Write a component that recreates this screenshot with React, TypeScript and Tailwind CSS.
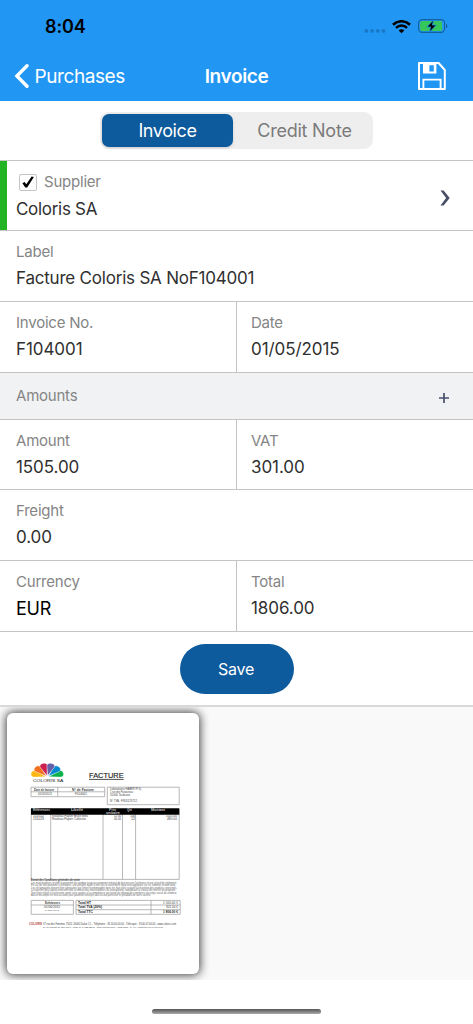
import type { ReactNode } from "react";

function StatusBar() {
  return (
    <div className="flex h-[51px] items-center justify-between pl-[45px] pr-[25px] pt-[2px]">
      <span className="text-[18px] font-semibold tracking-[-0.1px] text-black">8:04</span>
      <div className="flex items-center">
        <svg width="22" height="14" viewBox="0 0 22 14" fill="#1878c8">
          <circle cx="2.4" cy="10.9" r="1.9" />
          <circle cx="8.1" cy="10.9" r="1.9" />
          <circle cx="13.8" cy="10.9" r="1.9" />
          <circle cx="19.5" cy="10.9" r="1.9" />
        </svg>
        <svg className="ml-[6px]" width="19" height="14" viewBox="0 0 19 14" fill="none" stroke="#000">
          <path d="M1 4.7a12.2 12.2 0 0 1 17 0" strokeWidth="2.6" />
          <path d="M4 7.8a8 8 0 0 1 11 0" strokeWidth="2.5" />
          <path d="M9.5 13.2 6.7 10.4a3.9 3.9 0 0 1 5.6 0Z" fill="#000" stroke="none" />
        </svg>
        <svg className="relative top-[-1px] ml-[7px]" width="30" height="14" viewBox="0 0 30 14">
          <rect x="0.6" y="0.6" width="26" height="12.8" rx="3.6" fill="none" stroke="#165f9e" strokeWidth="1.1" />
          <path d="M28 4.7c1.8.6 1.8 4 0 4.6Z" fill="#165f9e" />
          <rect x="2.1" y="2.1" width="22" height="9.8" rx="2" fill="#35c759" />
          <path d="M15.7.8 8.8 8h3.8l-1.2 5.2L18.3 6h-3.9Z" fill="#000" stroke="#2196f3" strokeWidth="0.8" />
        </svg>
      </div>
    </div>
  );
}

function NavBar() {
  return (
    <div className="grid h-[50px] grid-cols-[1fr_auto_1fr] items-center pl-[14px] pr-[27px] text-white">
      <div className="flex items-center gap-[5.5px]">
        <svg width="15" height="26" viewBox="0 0 15 26" fill="none" stroke="#fff" strokeWidth="3.4" strokeLinecap="round" strokeLinejoin="miter">
          <path d="M13 2.8 2.9 13 13 23.2" />
        </svg>
        <span className="relative top-px text-[19px] tracking-[-0.42px]">Purchases</span>
      </div>
      <span className="relative left-[6.5px] top-px text-[19px] font-semibold tracking-[-0.38px]">Invoice</span>
      <svg className="justify-self-end" width="28" height="28" viewBox="0 0 28 28" fill="none" stroke="#fff" strokeWidth="2">
        <path d="M1 1h19.6l6.2 7v19H1Z" strokeLinejoin="round" />
        <path d="M5.4 27V17.6h17.2V27" strokeWidth="1.9" />
        <path fillRule="evenodd" d="M5 1h13.4v10.6H5ZM11.4 3.2v6.2h4.4V3.2Z" fill="#fff" stroke="none" />
      </svg>
    </div>
  );
}

function Field({ label, value, className = "", valueClass = "text-[17px] tracking-[-0.08px] text-[#303030]" }: {
  label: ReactNode;
  value: string;
  className?: string;
  valueClass?: string;
}) {
  return (
    <div className={`flex flex-col pl-4 pt-[11px] ${className}`}>
      <div className="h-5 text-[15px] leading-5 tracking-[-0.22px] text-[#858585]">{label}</div>
      <div className={`mt-[6px] h-5 leading-5 ${valueClass}`}>{value}</div>
    </div>
  );
}

const petals: [number, string][] = [
  [-74, "#fcb711"],
  [74, "#0db14b"],
  [-45, "#f37021"],
  [45, "#0089d0"],
  [-15, "#cc2050"],
  [15, "#6460aa"],
];

type Line = [x: number, y: number, width: number, size: number, text: string, weight?: number, color?: string];

const lines: Line[] = [
  [26, 68.6, 30.3, 3.9, "COLORIS SA", 400, "#222"],
  [27, 77.6, 20, 2.9, "Date de facture", 700],
  [65, 77.6, 22, 2.9, "N° de Facture", 700],
  [31, 82.2, 14, 2.6, "01/05/2015"],
  [68, 82.2, 12, 2.6, "F104001"],
  [103, 77.3, 31, 2.9, "Laboratoires HABER PI Kj"],
  [103, 80, 23, 2.9, "1 rue des Pastoureau"],
  [103, 82.6, 20, 2.9, "31000 Toulouse"],
  [103, 89.4, 27, 2.9, "N° TVA : FR05123712"],
  [26, 98.1, 17, 2.9, "Références", 700, "#ccc"],
  [64, 98.1, 12, 2.9, "Libellé", 700, "#ccc"],
  [102, 98.1, 7, 2.9, "Prix", 700, "#ccc"],
  [99, 101.1, 14, 2.9, "unitaire", 700, "#ccc"],
  [120, 98.1, 5, 2.9, "Qté", 700, "#ccc"],
  [144, 98.1, 14, 2.9, "Montant", 700, "#ccc"],
  [26, 103.9, 11, 2.9, "111022"],
  [26, 106.5, 11, 2.9, "111023"],
  [45, 103.9, 36, 2.9, "Rouleau Papier Brute bleu"],
  [45, 106.5, 34, 2.9, "Rouleau Papier Collector"],
  [107, 103.9, 7, 2.9, "12.00"],
  [107, 106.5, 7, 2.9, "40.00"],
  [123, 103.9, 5, 2.9, "100"],
  [124, 106.5, 4, 2.9, "12"],
  [159, 103.9, 11, 2.9, "1025.00"],
  [160, 106.5, 10, 2.9, "480.00"],
  [24, 168.2, 49, 2.8, "Extrait des Conditions générales de vente", 700],
  [38, 190.6, 15, 2.8, "Echéances", 700],
  [37, 195.4, 16, 2.8, "01/06/2015"],
  [38, 197.5, 14, 2.2, "1 806.00 €"],
  [71, 190.6, 13, 2.9, "Total HT", 700, "#222"],
  [71, 195.4, 24, 2.9, "Total TVA (20%)", 700, "#222"],
  [71, 200.1, 15, 2.9, "Total TTC", 700, "#222"],
  [156, 190.6, 15, 2.8, "1 505.00 €"],
  [159, 195.4, 12, 2.8, "301.00 €"],
  [156, 200.1, 15, 2.8, "1 806.00 €", 700, "#222"],
  [22, 212.3, 13, 2.6, "COLORIS", 700, "#b04038"],
  [36, 212.3, 133, 2.6, "37 rue des Femmes 75011 20000 Dakar C1 - Téléphone : 33.20.00.00.00 - Télécopie : 33.00.07.00.00 - www.coloris.com"],
  [36, 214.7, 120, 2.3, "SA au Capital de 200 000€ - Code NAF 1234B000 - Siret 0000000000 - RCS Nant - N° TVA intracom FR 00 000 000"],
  [24, 170.7, 146, 2.8, "Les marchandises restent la propriété du vendeur jusqu'au paiement intégral de leur prix par l'acheteur et tout retard de règlement.", 400, "#666"],
  [24, 173.2, 145, 2.8, "En cas de non paiement à échéance, une pénalité égale à trois fois le taux intérêt légal sera appliquée sur les sommes restant dues.", 400, "#666"],
  [24, 175.7, 146, 2.8, "Les réclamations doivent être adressées par lettre recommandée dans les huit jours suivant la réception des produits concernés.", 400, "#666"],
  [24, 178.2, 145, 2.8, "Le transfert des risques intervient dès la remise des marchandises au transporteur, nonobstant la clause de réserve de propriété.", 400, "#666"],
  [24, 180.7, 146, 2.8, "Tout litige relatif à la présente vente sera soumis à la compétence exclusive du tribunal de commerce du siège social du vendeur.", 400, "#666"],
  [24, 183.2, 120, 2.8, "Aucun escompte ne sera accordé pour paiement anticipé sauf accord particulier et préalable de notre société.", 400, "#666"],
];

function InvoiceScan() {
  return (
    <svg width="192" height="261" viewBox="0 0 192 261" fontFamily="'Liberation Sans', sans-serif">
      <svg x="20" y="46" width="42" height="18.2" viewBox="20 46 42 18.2">
        {petals.map(([angle, color]) => (
          <path
            key={color}
            d="M40.3 62.8L37.1 53.4C35.9 48.6 44.7 48.6 43.5 53.4Z"
            fill={color}
            stroke="#fff"
            strokeWidth="0.4"
            transform={`translate(40.3 64) scale(1.18 1) rotate(${angle}) translate(-40.3 -64)`}
          />
        ))}
      </svg>
      <text x="82" y="65.2" fontSize="7.3" textLength="34.7" lengthAdjust="spacingAndGlyphs" fill="#222" stroke="#222" strokeWidth="0.15">FACTURE</text>
      <path d="M82 66.4h34.7" stroke="#222" strokeWidth="0.8" />
      <g fill="none" stroke="#999" strokeWidth="0.7">
        <path d="M24 74.2h73.7v9.5H24ZM24 78.8h73.7M50.7 74.2v9.5M100.3 74.2h71.9v17.5h-71.9Z" />
        <path d="M24.2 96v70.4h148V96M43.7 101v65.4M96 101v65.4M115.5 101v65.4M128.6 101v65.4" />
        <path d="M24.2 187.4h42.2v13.9H24.2ZM24.2 192h42.2M69 187.4h104.2v13.9H69ZM69 192h104.2M69 196.7h104.2M144 187.4v13.9" />
      </g>
      <path d="M24 95.3h148.3v6.4H24Z" fill="#000" />
      {lines.map(([x, y, width, size, text, weight = 400, color = "#444"]) => (
        <text key={`${x}-${y}`} x={x} y={y} fontSize={size} fontWeight={weight} fill={color} textLength={width} lengthAdjust="spacingAndGlyphs">
          {text}
        </text>
      ))}
    </svg>
  );
}

export default function App() {
  return (
    <div className="flex h-[1024px] w-[473px] flex-col overflow-hidden bg-white font-['Inter',sans-serif]">
      <header className="h-[101px] shrink-0 bg-[#2196f3]">
        <StatusBar />
        <NavBar />
      </header>

      <div className="flex h-[59px] shrink-0 justify-center pt-[11px]">
        <div className="flex h-[37px] w-[273px] rounded-[9px] bg-[#eeeeee] p-[2px] text-[18px]">
          <button className="h-[33px] w-[131px] rounded-[7px] bg-[#0d5a9c] tracking-[-0.4px] text-white shadow-[0_1px_3px_rgba(0,0,0,0.15)]">Invoice</button>
          <button className="flex-1 pl-[5px] tracking-[-0.25px] text-[#7b7b7b]">Credit Note</button>
        </div>
      </div>

      <main className="flex shrink-0 flex-col">
        <section className="flex h-[70px] items-center justify-between border-t border-[#c4c4c4] pr-[23px]">
          <div className="h-full w-[7px] bg-[#22b422]" />
          <Field
            className="h-full flex-1 !pl-[9px]"
            valueClass="pt-px text-[17px] tracking-[-0.3px] text-[#303030]"
            label={
              <span className="flex h-5 items-center gap-[7px] pl-[3px]">
                <span className="flex h-[17px] w-[18px] items-center justify-center rounded-[2px] border border-[#c4c4c4]">
                  <svg width="14" height="14" viewBox="0 0 14 14">
                    <path d="M1.4 8.2 3.6 7l1.7 2.3L10.6 1.6l2.3.3-6.7 10.6-1.9.1Z" fill="#000" />
                  </svg>
                </span>
                Supplier
              </span>
            }
            value="Coloris SA"
          />
          <svg className="mt-[5px]" width="10" height="16" viewBox="0 0 10 16" fill="#484e66">
            <path d="M.5.5h3.1L9.7 8l-6.1 7.5H.5L6.1 8Z" />
          </svg>
        </section>
        <section className="h-[71px] border-t border-[#c4c4c4]">
          <Field label="Label" value="Facture Coloris SA NoF104001" valueClass="text-[17px] tracking-[-0.21px] text-[#303030]" />
        </section>
        <section className="grid h-[71px] grid-cols-[236px_1fr] border-t border-[#c4c4c4]">
          <Field label="Invoice No." value="F104001" />
          <Field className="border-l border-[#c4c4c4] !pl-[14px]" label="Date" value="01/05/2015" />
        </section>
        <section className="flex h-[47px] items-center justify-between border-t border-[#c4c4c4] bg-[#f0f2f4] pl-4 pr-[24px]">
          <span className="text-[15px] tracking-[-0.22px] text-[#858585]">Amounts</span>
          <svg className="mt-[4px]" width="10" height="10" viewBox="0 0 10 10" stroke="#484e6c" strokeWidth="1.7">
            <path d="M5 0v10M0 5h10" />
          </svg>
        </section>
        <section className="grid h-[70px] grid-cols-[236px_1fr] border-t border-[#c4c4c4]">
          <Field label="Amount" value="1505.00" />
          <Field className="border-l border-[#c4c4c4] !pl-[14px]" label="VAT" value="301.00" />
        </section>
        <section className="h-[71px] border-t border-[#c4c4c4]">
          <Field label="Freight" value="0.00" />
        </section>
        <section className="grid h-[71px] grid-cols-[236px_1fr] border-t border-[#c4c4c4]">
          <Field label="Currency" value="EUR" valueClass="pt-px text-[18px] tracking-[-0.2px] text-black" />
          <Field className="border-l border-[#c4c4c4] !pl-[14px]" label="Total" value="1806.00" />
        </section>
        <section className="flex h-[74px] justify-center border-t border-[#c4c4c4] pt-[12px]">
          <button className="h-[50px] w-[114px] rounded-full bg-[#0d5a9c] pr-px text-[16px] tracking-[-0.2px] text-white">Save</button>
        </section>
      </main>

      <section className="h-[275px] shrink-0 overflow-hidden border-t-2 border-[#d9d9d9] bg-[#f9f9f9] pl-[7px] pt-[6px]">
        <div className="h-[261px] w-[192px] overflow-hidden rounded-[6px] bg-white shadow-[0_0_10px_1px_rgba(0,0,0,0.75)]">
          <InvoiceScan />
        </div>
      </section>

      <footer className="flex flex-1 items-start justify-center pt-[29px]">
        <div className="h-[5px] w-[169px] rounded-full bg-gradient-to-b from-[#555] to-[#aaa]" />
      </footer>
    </div>
  );
}
